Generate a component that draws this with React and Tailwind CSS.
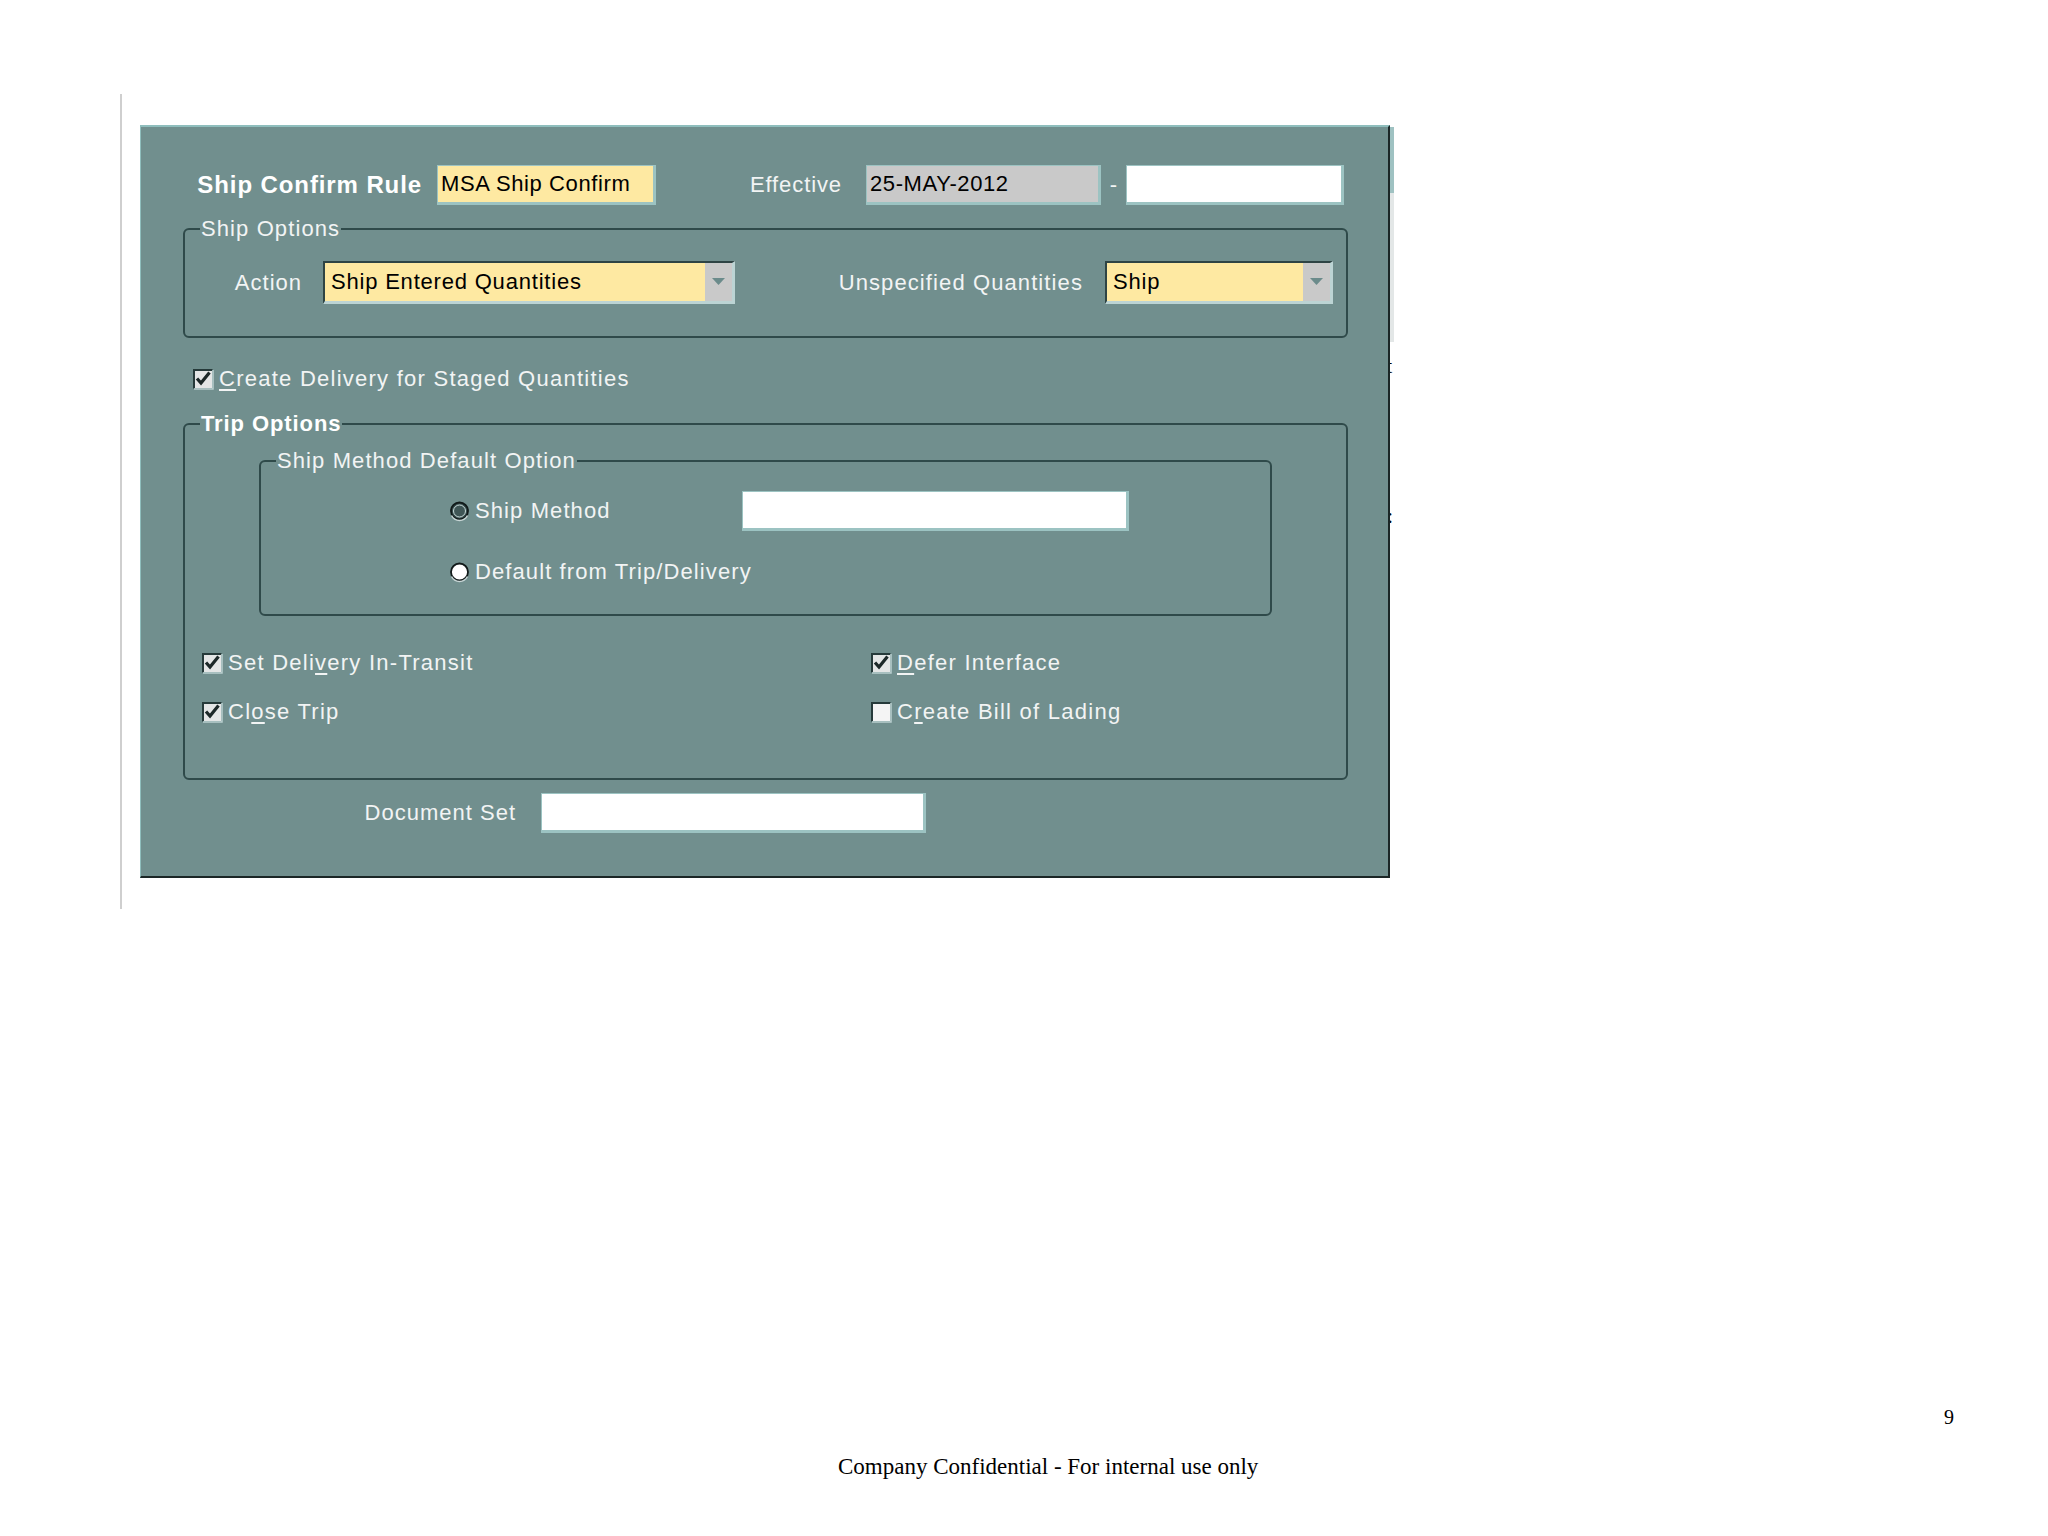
import React from "react";

const ui = { fontFamily: '"Liberation Sans", Arial, sans-serif' };
const serif = { fontFamily: '"Liberation Serif", "Times New Roman", serif' };

function Box({ checked }) {
  return (
    <svg width="21" height="21" viewBox="0 0 21 21" className="shrink-0">
      <rect x="1" y="1" width="18" height="18" fill={checked ? "#e4e6e6" : "#f4f4f4"} />
      <path d="M1 19.5V1H19.5" stroke="#263a3a" strokeWidth="2" fill="none" />
      <path d="M1 20H20V1" stroke="#b9cfcf" strokeWidth="1.5" fill="none" />
      {checked && <path d="M4 9.5L8 14L16.5 3.5" stroke="#1c2828" strokeWidth="3.2" fill="none" />}
    </svg>
  );
}

function Radio({ on }) {
  return (
    <svg width="21" height="21" viewBox="0 0 21 21" className="shrink-0">
      <circle cx="10.5" cy="10" r="8.5" fill={on ? "#3b5252" : "#ffffff"} stroke="#111a1a" strokeWidth="1.8" />
      {on && <circle cx="10.5" cy="10" r="6" fill="#3f5656" stroke="#c9d9d9" strokeWidth="1" />}
      <path d="M2.5 14.5A9 9 0 0 0 18.5 14.5" stroke="#c8d6d6" strokeWidth="1.5" fill="none" />
    </svg>
  );
}

function Field({ w, bg, children }) {
  return (
    <div className={`${w} ${bg} h-[40px] shrink-0 flex items-center pl-[3px] text-black border border-[#9cc3c2] border-b-[3px] border-r-[3px] tracking-[0.6px] whitespace-nowrap`}>
      {children}
    </div>
  );
}

function Select({ w, children }) {
  return (
    <div className={`${w} h-[43px] shrink-0 flex bg-[#fee9a2] border-t-2 border-l-2 border-[#2e4444] border-b-[3px] border-r-[3px] border-b-[#bcd4d4] border-r-[#bcd4d4]`}>
      <div className="flex-1 flex items-center pl-[6px] text-black tracking-[0.8px] whitespace-nowrap">{children}</div>
      <div className="w-[27px] bg-[#c9c9c9] flex items-center justify-center">
        <svg width="13" height="8" viewBox="0 0 13 8">
          <path d="M0 0H13L6.5 7Z" fill="#6b8b8b" />
        </svg>
      </div>
    </div>
  );
}

function Check({ checked, children }) {
  return (
    <div className="flex items-center h-[30px]">
      <Box checked={checked} />
      <span className="ml-[5px] text-[#f2f4f4] tracking-[1.25px] whitespace-nowrap">{children}</span>
    </div>
  );
}

const U = ({ children }) => <span className="underline underline-offset-[3px]">{children}</span>;

export default function App() {
  return (
    <div className="w-[2048px] h-[1536px] bg-white relative overflow-hidden" style={ui}>
      <div className="pt-[94px] pl-[120px]">
        <div className="border-l-2 border-[#cfcfcf] h-[815px] pl-[18px] pt-[31px]">
          <div className="relative w-[1250px]">
            <div className="relative w-[1250px] h-[753px] bg-[#718f8e] border-t-2 border-l border-[#8fbebd] border-r-2 border-b-2 border-r-[#1b2626] border-b-[#1b2626] text-[22px] leading-[26px]">
              {/* Row 1 */}
              <div className="flex items-center h-[40px] mt-[38px]">
                <div className="w-[296px] text-right pr-[15px] text-white font-bold text-[24px] tracking-[0.9px] whitespace-nowrap">Ship Confirm Rule</div>
                <Field w="w-[219px]" bg="bg-[#fee9a2]">MSA Ship Confirm</Field>
                <div className="w-[210px] text-right pr-[24px] text-[#f2f4f4] tracking-[0.9px]">Effective</div>
                <Field w="w-[235px]" bg="bg-[#c9c9c9]">25-MAY-2012</Field>
                <div className="w-[25px] text-center text-[#f2f4f4]">-</div>
                <Field w="w-[218px]" bg="bg-white"></Field>
              </div>

              {/* Ship Options */}
              <fieldset className="ml-[42px] mt-[11px] w-[1165px] border-2 border-[#2f4a4a] rounded-[6px] pb-[32px]">
                <legend className="ml-[15px] px-[1px] text-[#f2f4f4] tracking-[1.1px]">Ship Options</legend>
                <div className="flex items-center mt-[19px]">
                  <div className="w-[138px] text-right pr-[21px] text-[#f2f4f4] tracking-[1px]">Action</div>
                  <Select w="w-[412px]">Ship Entered Quantities</Select>
                  <div className="w-[370px] text-right pr-[22px] text-[#f2f4f4] tracking-[1.1px] whitespace-nowrap">Unspecified Quantities</div>
                  <Select w="w-[228px]">Ship</Select>
                </div>
              </fieldset>

              <div className="ml-[52px] mt-[26px]">
                <Check checked>
                  <U>C</U>reate Delivery for Staged Quantities
                </Check>
              </div>

              {/* Trip Options */}
              <fieldset className="ml-[42px] mt-[17px] w-[1165px] border-2 border-[#2f4a4a] rounded-[6px] pb-[51px]">
                <legend className="ml-[15px] px-[1px] text-white font-bold tracking-[0.9px]">Trip Options</legend>

                <fieldset className="ml-[74px] mt-[11px] w-[1013px] border-2 border-[#2f4a4a] rounded-[6px] pb-[27px]">
                  <legend className="ml-[15px] px-[1px] text-[#f2f4f4] tracking-[1.1px]">Ship Method Default Option</legend>
                  <div className="flex items-center h-[40px] mt-[17px] pl-[188px]">
                    <Radio on />
                    <div className="w-[272px] pl-[5px] text-[#f2f4f4] tracking-[1.1px]">Ship Method</div>
                    <Field w="w-[387px]" bg="bg-white"></Field>
                  </div>
                  <div className="flex items-center h-[30px] mt-[26px] pl-[188px]">
                    <Radio />
                    <div className="pl-[5px] text-[#f2f4f4] tracking-[1.1px] whitespace-nowrap">Default from Trip/Delivery</div>
                  </div>
                </fieldset>

                <div className="grid grid-cols-[669px_1fr] pl-[17px] mt-[32px] gap-y-[19px]">
                  <Check checked>
                    Set Deli<U>v</U>ery In-Transit
                  </Check>
                  <Check checked>
                    <U>D</U>efer Interface
                  </Check>
                  <Check checked>
                    Cl<U>o</U>se Trip
                  </Check>
                  <Check>
                    C<U>r</U>eate Bill of Lading
                  </Check>
                </div>
              </fieldset>

              {/* Document Set */}
              <div className="flex items-center h-[40px] mt-[13px]">
                <div className="w-[400px] text-right pr-[25px] text-[#f2f4f4] tracking-[1px]">Document Set</div>
                <Field w="w-[385px]" bg="bg-white"></Field>
              </div>
            </div>

            {/* bits of the document peeking out behind the form window */}
            <div className="absolute left-[1250px] top-[2px] w-[4px] h-[66px] bg-[#9fc2c2]"></div>
            <div className="absolute left-[1250px] top-[68px] w-[4px] h-[149px] bg-[#e3e7e7]"></div>
            <div className="absolute left-[1250px] top-[228px] w-[4px] h-[26px] overflow-hidden text-[22px] leading-[26px] text-black" style={serif}>
              <span className="block -ml-[4px]">t</span>
            </div>
            <div className="absolute left-[1250px] top-[378px] w-[4px] h-[26px] overflow-hidden text-[22px] leading-[26px] text-black" style={serif}>
              <span className="block -ml-[3px]">:</span>
            </div>
          </div>
        </div>
      </div>

      {/* page footer */}
      <div className="mt-[496px] pr-[94px] flex justify-end text-[20px] leading-[24px] text-black" style={serif}>
        9
      </div>
      <div className="mt-[24px] pl-[838px] text-[23px] leading-[28px] text-black" style={serif}>
        Company Confidential - For internal use only
      </div>
    </div>
  );
}
